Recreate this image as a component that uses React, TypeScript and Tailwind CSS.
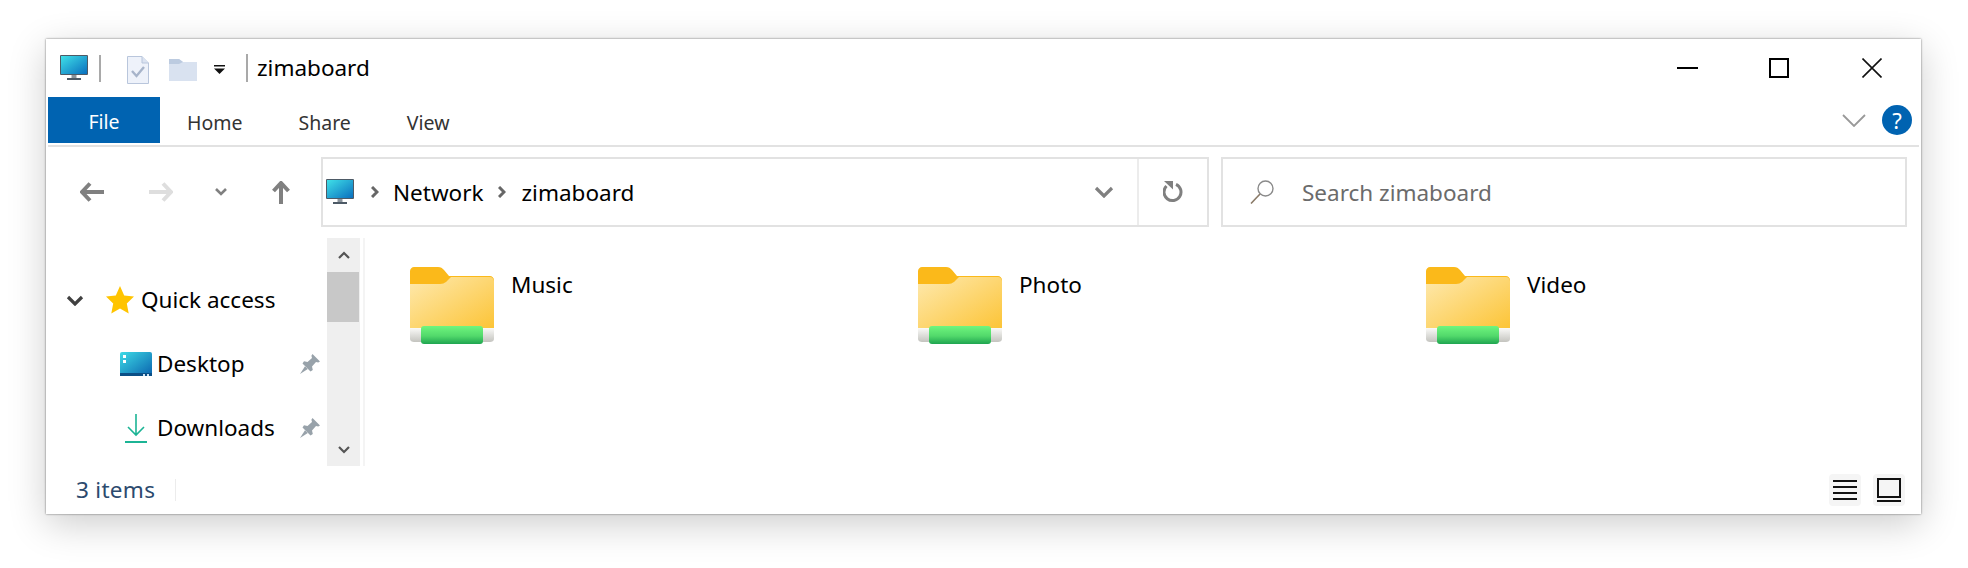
import type { ReactNode } from "react";

const FONT = "font-['Noto_Sans','Open_Sans',sans-serif]";

function Monitor({ className }: { className?: string }) {
  return (
    <svg viewBox="0 0 28 26" className={className}>
      <defs>
        <linearGradient id="screen" x1="0" y1="0" x2="1" y2="1">
          <stop offset="0" stopColor="#3fe0e8" />
          <stop offset="1" stopColor="#0a6fbe" />
        </linearGradient>
      </defs>
      <rect x="0" y="0" width="28" height="20" rx="1" fill="#4d5a66" />
      <rect x="1" y="1" width="26" height="18" fill="url(#screen)" />
      <rect x="11.5" y="20" width="5" height="3" fill="#8b949c" />
      <rect x="7" y="23" width="14" height="2" fill="#4d5a66" />
    </svg>
  );
}

function Folder() {
  return (
    <svg viewBox="0 0 84 78" className="h-[78px] w-[84px] shrink-0">
      <defs>
        <linearGradient id="fbody" x1="0" y1="0" x2="1" y2="1">
          <stop offset="0" stopColor="#fee9ae" />
          <stop offset="1" stopColor="#fcc436" />
        </linearGradient>
        <linearGradient id="fgreen" x1="0" y1="0" x2="0" y2="1">
          <stop offset="0" stopColor="#6ff57e" />
          <stop offset="0.55" stopColor="#52d96b" />
          <stop offset="1" stopColor="#1fa550" />
        </linearGradient>
        <linearGradient id="fbase" x1="0" y1="0" x2="0" y2="1">
          <stop offset="0" stopColor="#fafaf8" />
          <stop offset="1" stopColor="#c4c4bf" />
        </linearGradient>
      </defs>
      <path d="M4 0H28C31 0 32 1 34 3L39 9H80C82 9 84 11 84 13V30H0V4C0 2 2 0 4 0Z" fill="#fbb91a" />
      <path d="M0 17H30C33 17 34 16 36 15L41 10H80C82 10 84 12 84 14V62H0Z" fill="url(#fbody)" />
      <path d="M0 61H84V72C84 74 82 75 80 75H4C2 75 0 74 0 72Z" fill="url(#fbase)" />
      <rect x="11" y="59" width="62" height="18" rx="3" fill="url(#fgreen)" />
    </svg>
  );
}

function Pin() {
  return (
    <svg viewBox="0 0 20 20" className="h-5 w-5">
      <path d="M12.5 0L20 7.5L18.2 8.6L16 8L12 12.5L12.8 16L10.5 17.5L2.5 9.5L4 7.2L7.5 8L12 4L11.4 1.8Z" fill="#98a2aa" />
      <path d="M5 12.2L0 20L7.8 15Z" fill="#98a2aa" />
    </svg>
  );
}

function FolderItem({ name }: { name: string }) {
  return (
    <div className="flex items-start">
      <Folder />
      <span className="ml-[17px] mt-[2px] text-[22.5px] leading-[32px] text-black">{name}</span>
    </div>
  );
}

function Tab({ children, className }: { children: ReactNode; className: string }) {
  return <span className={`mt-[5px] text-[19.5px] leading-[26px] text-[#333] ${className}`}>{children}</span>;
}

function Crumb({ className }: { className: string }) {
  return (
    <svg viewBox="0 0 8 12" className={`h-[12px] w-[8px] ${className}`}>
      <path d="M1 1L6 6L1 11" fill="none" stroke="#666" strokeWidth="3" />
    </svg>
  );
}

export default function App() {
  return (
    <div className={`h-[568px] w-[1968px] overflow-hidden bg-white pl-[46px] pt-[39px] ${FONT}`}>
      <div className="flex h-[475px] w-[1875px] flex-col bg-white shadow-[0_0_2px_rgba(0,0,0,0.55),0_10px_36px_rgba(0,0,0,0.2)]">
        {/* Title bar */}
        <div className="flex h-[58px] shrink-0 items-center pl-[14px]">
          <Monitor className="h-[26px] w-[28px]" />
          <div className="ml-[11px] h-[27px] w-[2px] bg-[#a9a9a9]" />
          <svg viewBox="0 0 22 28" className="ml-[26px] mt-[3px] h-[28px] w-[22px]">
            <path d="M.5.5H15L21.5 7V27.5H.5Z" fill="#eef2fa" stroke="#b9c6dc" />
            <path d="M15 .5V7H21.5" fill="#dbe3f1" stroke="#b9c6dc" />
            <path d="M5 15L9.5 20L17 11" fill="none" stroke="#a7b4ca" strokeWidth="2.4" />
          </svg>
          <svg viewBox="0 0 28 22" className="ml-[20px] mt-[3px] h-[22px] w-[28px]">
            <path d="M0 0H10L14 3H28V22H0Z" fill="#d9e2f0" />
            <path d="M0 0H10L14 3L10 5H0Z" fill="#bccbe0" />
          </svg>
          <svg viewBox="0 0 11 9" className="ml-[17px] mt-[2px] h-[9px] w-[11px]">
            <rect x="0" y="0" width="11" height="1.5" fill="#111" />
            <path d="M0 3.5H11L5.5 9Z" fill="#111" />
          </svg>
          <div className="ml-[21px] h-[28px] w-[2px] bg-[#a9a9a9]" />
          <span className="ml-[9px] text-[22.5px] leading-[32px] text-black">zimaboard</span>
          <div className="ml-auto flex items-center pr-[39px]">
            <div className="h-[2px] w-[21px] bg-black" />
            <div className="ml-[71px] h-[20px] w-[20px] border-2 border-black" />
            <svg viewBox="0 0 20 20" className="ml-[73px] h-[20px] w-[20px]">
              <path d="M.5.5L19.5 19.5M19.5.5L.5 19.5" stroke="#111" strokeWidth="1.6" />
            </svg>
          </div>
        </div>

        {/* Ribbon tabs */}
        <div className="mx-[2px] flex h-[50px] shrink-0 items-start border-b-2 border-[#e2e2e2]">
          <div className="flex h-[46px] w-[112px] items-center justify-center bg-[#0063b1] pt-[3px] text-[19.5px] text-white">File</div>
          <div className="flex h-[46px] flex-1 items-center pr-[7px]">
            <Tab className="ml-[27px]">Home</Tab>
            <Tab className="ml-[56px]">Share</Tab>
            <Tab className="ml-[56px]">View</Tab>
            <svg viewBox="0 0 24 13" className="ml-auto h-[13px] w-[24px]">
              <path d="M1 1L12 12L23 1" fill="none" stroke="#999" strokeWidth="1.8" />
            </svg>
            <div className="ml-[16px] flex h-[30px] w-[30px] items-center justify-center rounded-full bg-[#0063b1] text-[22px] leading-none text-white">?</div>
          </div>
        </div>

        {/* Address row */}
        <div className="mt-[10px] flex h-[70px] shrink-0 items-center">
          <div className="flex w-[275px] items-center">
            <svg viewBox="0 0 24 20" className="ml-[34px] h-[20px] w-[24px]">
              <path d="M10 1.5L2 10L10 18.5M2.5 10H24" fill="none" stroke="#808080" strokeWidth="4" />
            </svg>
            <svg viewBox="0 0 24 20" className="ml-[45px] h-[20px] w-[24px]">
              <path d="M14 1.5L22 10L14 18.5M21.5 10H0" fill="none" stroke="#dedede" strokeWidth="4" />
            </svg>
            <svg viewBox="0 0 12 8" className="ml-[42px] h-[8px] w-[12px]">
              <path d="M1 1L6 6L11 1" fill="none" stroke="#808080" strokeWidth="2.6" />
            </svg>
            <svg viewBox="0 0 18 23" className="ml-[45px] h-[23px] w-[18px]">
              <path d="M1.5 10L9 2L16.5 10M9 2.5V23" fill="none" stroke="#808080" strokeWidth="4" />
            </svg>
          </div>
          <div className="flex h-[70px] w-[888px] items-center border-2 border-[#e2e2e2]">
            <Monitor className="ml-[3px] h-[26px] w-[28px]" />
            <Crumb className="ml-[17px]" />
            <span className="ml-[14px] mt-[2px] text-[22.5px] leading-[32px] text-black">Network</span>
            <Crumb className="ml-[14px]" />
            <span className="ml-[16px] mt-[2px] text-[22.5px] leading-[32px] text-black">zimaboard</span>
            <svg viewBox="0 0 20 12" className="ml-auto mr-[23px] h-[12px] w-[20px]">
              <path d="M2 2L10 10L18 2" fill="none" stroke="#808080" strokeWidth="3.2" />
            </svg>
            <div className="flex h-full w-[70px] items-center justify-center border-l-2 border-[#ececec]">
              <svg viewBox="0 0 20 22" className="h-[22px] w-[20px]">
                <path d="M13 3.3A8.5 8.5 0 1 1 3.5 5" fill="none" stroke="#808080" strokeWidth="3" />
                <path d="M1 0H10V8.5Z" fill="#808080" />
              </svg>
            </div>
          </div>
          <div className="ml-[12px] flex h-[70px] w-[686px] items-center border-2 border-[#e2e2e2]">
            <svg viewBox="0 0 24 24" className="ml-[27px] h-[24px] w-[24px]">
              <circle cx="15.5" cy="8.5" r="7.5" fill="none" stroke="#8a8a8a" strokeWidth="1.4" />
              <path d="M10 14L1 23.5" stroke="#8a7a68" strokeWidth="1.6" />
            </svg>
            <span className="ml-[28px] mt-[2px] text-[22.5px] leading-[32px] text-[#6b6b6b]">Search zimaboard</span>
          </div>
        </div>

        {/* Body */}
        <div className="mt-[11px] flex h-[228px] shrink-0">
          <div className="w-[281px] shrink-0 pl-[20px] pt-[40px]">
            <div className="flex h-[44px] items-center">
              <svg viewBox="0 0 18 11" className="h-[11px] w-[18px]">
                <path d="M2 2L9 9L16 2" fill="none" stroke="#404040" strokeWidth="3.2" />
              </svg>
              <svg viewBox="0 0 28 28" className="ml-[22px] h-[28px] w-[28px]">
                <path d="M14 0L18.2 9.4L28 10.6L20.8 17.4L22.7 27.5L14 22.4L5.3 27.5L7.2 17.4L0 10.6L9.8 9.4Z" fill="#ffc400" />
              </svg>
              <span className="ml-[7px] text-[22.5px] leading-[32px] text-black">Quick access</span>
            </div>
            <div className="mt-[20px] flex h-[44px] items-center">
              <svg viewBox="0 0 32 24" className="ml-[54px] h-[24px] w-[32px]">
                <defs>
                  <linearGradient id="desk" x1="0" y1="0" x2="1" y2="1">
                    <stop offset="0" stopColor="#3ddbe6" />
                    <stop offset="1" stopColor="#0a62ae" />
                  </linearGradient>
                </defs>
                <rect width="32" height="24" rx="2" fill="url(#desk)" />
                <rect y="21" width="32" height="3" fill="#0b4f86" />
                <rect x="3" y="3" width="3" height="3" fill="#fff" />
                <rect x="3" y="8" width="3" height="3" fill="#fff" />
                <rect x="23" y="22" width="2" height="2" fill="#cfe5f5" />
                <rect x="27" y="22" width="2" height="2" fill="#cfe5f5" />
              </svg>
              <span className="ml-[5px] text-[22.5px] leading-[32px] text-black">Desktop</span>
              <div className="ml-auto mr-[7px]">
                <Pin />
              </div>
            </div>
            <div className="mt-[20px] flex h-[44px] items-center">
              <svg viewBox="0 0 22 29" className="ml-[59px] h-[29px] w-[22px]">
                <path d="M11 0V21M3 13L11 21L19 13" fill="none" stroke="#1cb495" strokeWidth="1.6" />
                <rect y="27" width="22" height="2" fill="#1cb495" />
              </svg>
              <span className="ml-[10px] text-[22.5px] leading-[32px] text-black">Downloads</span>
              <div className="ml-auto mr-[7px]">
                <Pin />
              </div>
            </div>
          </div>

          <div className="flex w-[33px] shrink-0 flex-col items-stretch bg-[#efefef]">
            <div className="flex h-[34px] shrink-0 items-center justify-center">
              <svg viewBox="0 0 12 8" className="h-[8px] w-[12px]">
                <path d="M1 7L6 2L11 7" fill="none" stroke="#555" strokeWidth="2.2" />
              </svg>
            </div>
            <div className="mr-[1px] h-[50px] shrink-0 bg-[#c8c8c8]" />
            <div className="mb-[12px] mt-auto flex h-[8px] items-center justify-center">
              <svg viewBox="0 0 12 8" className="h-[8px] w-[12px]">
                <path d="M1 1L6 6L11 1" fill="none" stroke="#555" strokeWidth="2.2" />
              </svg>
            </div>
          </div>
          <div className="ml-[3px] w-[2px] shrink-0 bg-[#f4f4f4]" />

          <div className="grid flex-1 grid-cols-[508px_508px_508px] pl-[45px] pt-[29px]">
            <FolderItem name="Music" />
            <FolderItem name="Photo" />
            <FolderItem name="Video" />
          </div>
        </div>

        {/* Status bar */}
        <div className="flex flex-1 items-center pl-[30px] pr-[16px]">
          <span className="text-[22.5px] leading-[30px] tracking-[0.3px] text-[#2c4a6e]">3 items</span>
          <div className="ml-[20px] h-[22px] w-[1px] bg-[#ececec]" />
          <div className="ml-auto flex h-[32px] w-[32px] items-center justify-center rounded-[4px] bg-[#f5f5f5]">
            <svg viewBox="0 0 24 20" className="h-[20px] w-[24px]">
              <path d="M0 1H24M0 7H24M0 13H24M0 19H24" stroke="#111" strokeWidth="2" />
            </svg>
          </div>
          <div className="ml-[12px] flex h-[32px] w-[32px] items-center justify-center rounded-[4px] bg-[#f5f5f5]">
            <svg viewBox="0 0 24 24" className="h-[24px] w-[24px]">
              <rect x="1" y="1" width="22" height="18" fill="none" stroke="#111" strokeWidth="2" />
              <path d="M0 23H24" stroke="#111" strokeWidth="2" />
            </svg>
          </div>
        </div>
      </div>
    </div>
  );
}
